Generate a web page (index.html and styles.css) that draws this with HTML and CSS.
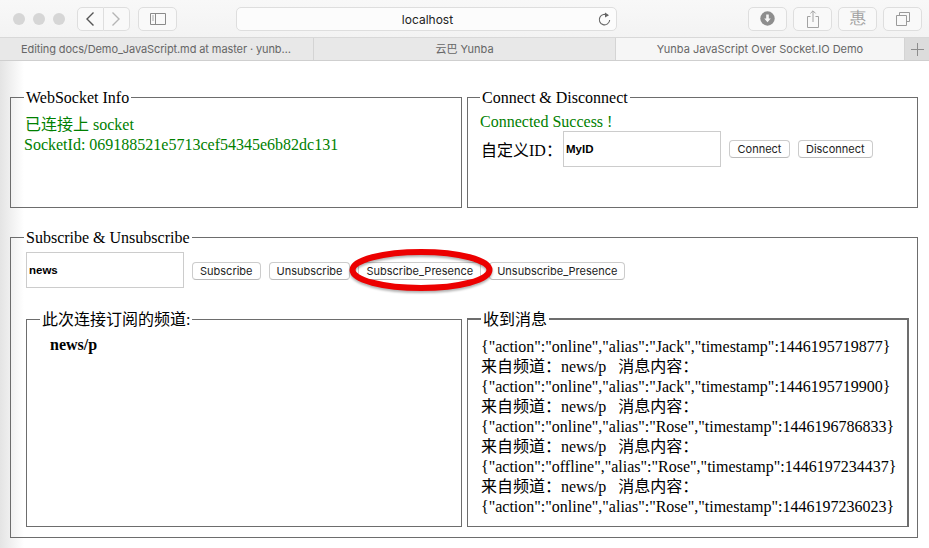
FILE: index.html
```html
<!DOCTYPE html>
<html lang="en">
<head>
    <meta charset="UTF-8">
    <meta name="viewport" content="width=device-width, initial-scale=1.0">
    <title>Yunba JavaScript Over Socket.IO Demo</title>
    <link rel="stylesheet" href="styles.css">
</head>
<body>
    <header class="browser">
        <div class="toolbar">
            <div class="lights"><span></span><span></span><span></span></div>
            <div class="nav-group">
                <button class="tool tool-nav"><svg width="10" height="16" viewBox="0 0 10 16"><path d="M8.5 1.5 2 8l6.5 6.5" fill="none" stroke="#555" stroke-width="1.4"/></svg></button>
                <button class="tool tool-nav"><svg width="10" height="16" viewBox="0 0 10 16"><path d="M1.5 1.5 8 8l-6.5 6.5" fill="none" stroke="#b5b5b5" stroke-width="1.4"/></svg></button>
            </div>
            <button class="tool tool-side"><svg width="16" height="12" viewBox="0 0 16 12"><path d="M.5.5h15v11H.5zM5.5.5v11" fill="none" stroke="#8a8a8a"/><path d="M2 3h2M2 5h2M2 7h2" stroke="#aaa"/></svg></button>
            <div class="url">
                <span>localhost</span>
                <svg class="reload" width="13" height="14" viewBox="0 0 13 14"><path d="M9.8 3.6A5.2 5.2 0 1 0 11.7 8" fill="none" stroke="#666" stroke-width="1.1"/><path d="M7 .6l4 2.6-4 2.2z" fill="#666"/></svg>
            </div>
            <div class="right-tools">
                <button class="tool"><svg width="15" height="15" viewBox="0 0 15 15"><circle cx="7.5" cy="7.5" r="7.2" fill="#8e8e8e"/><path d="M6.2 3.5h2.6v4h2L7.5 11.2 4.2 7.5h2z" fill="#f6f6f6"/></svg></button>
                <button class="tool"><svg width="12" height="18" viewBox="0 0 12 18"><path d="M3.5 6.5H.5v11h11v-11h-3M6 12V1M3.4 3.4 6 .8l2.6 2.6" fill="none" stroke="#a2a2a2"/></svg></button>
                <button class="tool tool-hui">惠</button>
                <button class="tool"><svg width="14" height="14" viewBox="0 0 14 14"><path d="M3.5 3.5v-3h10v9h-3M.5 3.5h10v10H.5z" fill="none" stroke="#9a9a9a"/></svg></button>
            </div>
        </div>
        <div class="tabs">
            <div class="tab tab-first">Editing docs/Demo_JavaScript.md at master · yunb…</div>
            <div class="tab tab-second">云巴 Yunba</div>
            <div class="tab tab-active">Yunba JavaScript Over Socket.IO Demo</div>
            <div class="tab-add"><svg width="13" height="13" viewBox="0 0 13 13"><path d="M6.5 0v13M0 6.5h13" stroke="#8d8d8d"/></svg></div>
        </div>
    </header>

    <main class="page">
        <div class="top-row">
            <fieldset class="box box-info">
                <legend>WebSocket Info</legend>
                <div class="status status-info">已连接上 socket<br><span class="socket-id">SocketId: 069188521e5713cef54345e6b82dc131</span></div>
            </fieldset>
            <fieldset class="box box-connect">
                <legend>Connect &amp; Disconnect</legend>
                <div class="status status-connect">Connected Success !</div>
                <div class="id-row">
                    <label for="myId">自定义ID：</label>
                    <input class="text-input" id="myId" type="text" value="MyID">
                    <button class="mac-btn btn-connect">Connect</button>
                    <button class="mac-btn">Disconnect</button>
                </div>
            </fieldset>
        </div>

        <fieldset class="box box-sub">
            <legend>Subscribe &amp; Unsubscribe</legend>
            <div class="sub-row">
                <input class="text-input" type="text" value="news">
                <button class="mac-btn">Subscribe</button>
                <button class="mac-btn">Unsubscribe</button>
                <button class="mac-btn">Subscribe_Presence</button>
                <button class="mac-btn">Unsubscribe_Presence</button>
            </div>
            <svg class="circle" width="147" height="47" viewBox="0 0 147 47">
                <ellipse cx="72" cy="22" rx="68.5" ry="18" fill="none" stroke="#ec0000" stroke-width="6"/>
            </svg>
            <div class="bottom-row">
                <fieldset class="box box-channels">
                    <legend>此次连接订阅的频道:</legend>
                    <div class="channel">news/p</div>
                </fieldset>
                <fieldset class="box box-messages">
                    <legend>收到消息</legend>
                    <div class="messages">
                        {"action":"online","alias":"Jack","timestamp":1446195719877}<br>
                        来自频道：news/p&nbsp;&nbsp;&nbsp;消息内容：<br>
                        {"action":"online","alias":"Jack","timestamp":1446195719900}<br>
                        来自频道：news/p&nbsp;&nbsp;&nbsp;消息内容：<br>
                        {"action":"online","alias":"Rose","timestamp":1446196786833}<br>
                        来自频道：news/p&nbsp;&nbsp;&nbsp;消息内容：<br>
                        {"action":"offline","alias":"Rose","timestamp":1446197234437}<br>
                        来自频道：news/p&nbsp;&nbsp;&nbsp;消息内容：<br>
                        {"action":"online","alias":"Rose","timestamp":1446197236023}
                    </div>
                </fieldset>
            </div>
        </fieldset>
    </main>
</body>
</html>
```

FILE: styles.css
```css
* {
    box-sizing: border-box;
}

html, body {
    height: 100%;
}

body {
    margin: 0;
    overflow: hidden;
    background: #fff;
    font-family: "Liberation Serif", "Noto Sans CJK SC", serif;
    font-size: 16px;
    color: #000;
}

/* browser chrome */
.browser {
    height: 61px;
    font-family: Inter, "Liberation Sans", "Noto Sans CJK SC", sans-serif;
}

.toolbar {
    display: flex;
    align-items: center;
    height: 38px;
    padding: 0 7px 0 13px;
    background: linear-gradient(#f8f8f8, #f3f3f3);
    border-bottom: 1px solid #d8d8d8;
}

.lights {
    display: flex;
    gap: 8px;
    width: 64px;
}

.lights span {
    width: 12px;
    height: 12px;
    border-radius: 50%;
    background: #d6d6d6;
}

.tool {
    display: flex;
    align-items: center;
    justify-content: center;
    width: 39px;
    height: 24px;
    padding: 0;
    background: #f9f9f9;
    border: 1px solid #dedede;
    border-radius: 5px;
}

.nav-group {
    display: flex;
    margin-right: 8px;
}

.tool-nav {
    width: 26.5px;
}

.tool-nav:first-child {
    border-radius: 5px 0 0 5px;
}

.tool-nav:last-child {
    border-left: none;
    border-radius: 0 5px 5px 0;
}

.tool-hui {
    font-size: 16px;
    color: #a0a0a0;
}

.url {
    position: relative;
    width: 381px;
    height: 24px;
    margin-left: 59px;
    padding-left: 2px;
    background: #fcfcfc;
    border: 1px solid #dedede;
    border-radius: 5px;
    font-size: 12px;
    line-height: 23px;
    text-align: center;
    color: #222;
}

.reload {
    position: absolute;
    right: 5px;
    top: 4px;
}

.right-tools {
    display: flex;
    gap: 6px;
    margin-left: auto;
}

.tabs {
    display: flex;
    height: 23px;
    background: #e8e8e8;
    border-bottom: 1px solid #cfcfcf;
    font-size: 11px;
    line-height: 22px;
    color: #666;
}

.tab {
    border-right: 1px solid #d4d4d4;
    text-align: center;
    white-space: nowrap;
}

.tab-first {
    width: 314px;
    padding-left: 21px;
    text-align: left;
    letter-spacing: -.1px;
}

.tab-second {
    width: 302px;
}

.tab-active {
    width: 289px;
    background: #f6f6f6;
}

.tab-add {
    display: flex;
    flex: 1;
    align-items: center;
    justify-content: center;
    background: #dcdcdc;
}

/* page */
.page {
    height: 487px;
    padding: 26px 11px 0 10px;
    background: linear-gradient(90deg, #e4e4e4, #fff 24px) no-repeat 0 0 / 100% 100%;
}

.box {
    min-width: 0;
    margin: 0;
    padding: 0;
    border: 1px solid #6d6d6d;
}

.box legend {
    margin-left: 13px;
    padding: 2px 2px 0;
    line-height: 18px;
}

.top-row {
    display: flex;
    gap: 5px;
}

.box-info, .box-connect {
    width: 452px;
    height: 121px;
}

.box-connect {
    width: 451px;
}

.box-connect legend {
    margin-left: 12px;
}

.status {
    color: #008000;
    line-height: 20px;
}

.status-info {
    padding: 8px 0 0 14px;
}

.socket-id {
    margin-left: -1px;
}

.status-connect {
    padding: 5px 0 0 12px;
}

.id-row {
    display: flex;
    align-items: center;
    margin-top: -1px;
    padding-left: 13px;
}

.id-row label {
    width: 82px;
}

.text-input {
    width: 158px;
    height: 36px;
    padding: 0 2px;
    background: #fff;
    border: 1px solid #ccc;
    font-family: "Liberation Sans", sans-serif;
    font-size: 11.5px;
    font-weight: bold;
    color: #000;
    outline: none;
}

.mac-btn {
    height: 18px;
    padding: 0 7px;
    background: #fff;
    border: 1px solid #ccc;
    border-bottom-color: #bbb;
    border-radius: 4px;
    font-family: Inter, "Liberation Sans", sans-serif;
    font-size: 11px;
    color: #222;
}

.btn-connect {
    padding: 0 7.5px;
}

.id-row .mac-btn {
    margin-left: 8px;
}

.box-sub {
    position: relative;
    height: 311px;
    margin-top: 19px;
    padding: 0 8px 0 15px;
}

.box-sub > legend {
    margin-left: -2px;
}

.sub-row {
    display: flex;
    align-items: center;
    gap: 8px;
    margin-top: 5px;
}

.sub-row .mac-btn {
    margin-top: 2px;
}

.circle {
    position: absolute;
    left: 338px;
    top: 1px;
    filter: drop-shadow(0 2px 1px rgba(0, 0, 0, .3));
}

.bottom-row {
    display: flex;
    gap: 5px;
    margin-top: 21px;
}

.box-channels {
    width: 436px;
    height: 218px;
}

.box-messages {
    flex: 1;
    height: 218px;
    border-top-width: 2px;
    border-right-width: 2px;
}

.channel {
    padding: 6px 0 0 23px;
    font-weight: bold;
    line-height: 20px;
}

.messages {
    padding: 8px 0 0 13px;
    line-height: 20px;
    white-space: nowrap;
}
```
